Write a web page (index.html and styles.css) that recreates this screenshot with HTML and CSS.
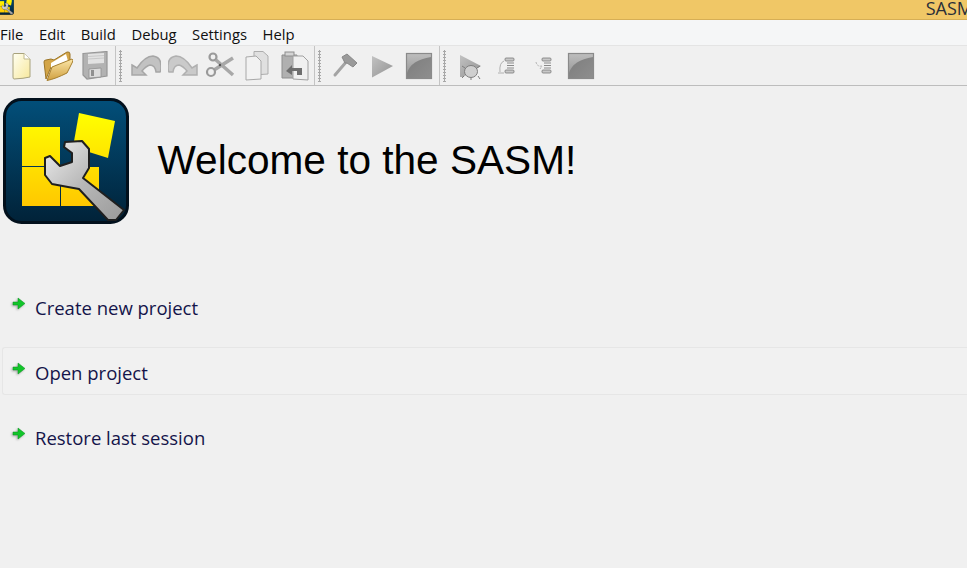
FILE: index.html
```html
<!DOCTYPE html>
<html lang="en">
<head>
<meta charset="utf-8">
<title>SASM</title>
<link rel="stylesheet" href="styles.css">
</head>
<body>
<svg class="defs" width="0" height="0" aria-hidden="true">
  <defs>
    <linearGradient id="playG" x1="0" y1="0" x2="1" y2="1"><stop offset="0" stop-color="#c2c2c2"/><stop offset="1" stop-color="#929292"/></linearGradient>
    <linearGradient id="stopLight" x1="0" y1="0" x2="0" y2="1"><stop offset="0" stop-color="#bdbdbd"/><stop offset="1" stop-color="#9a9a9a"/></linearGradient>
    <linearGradient id="stopDark" x1="0" y1="0" x2="1" y2="1"><stop offset="0" stop-color="#7c7c7c"/><stop offset="1" stop-color="#8e8e8e"/></linearGradient>
    <linearGradient id="logoBg" x1="0" y1="0" x2="0" y2="1"><stop offset="0" stop-color="#024f7a"/><stop offset="1" stop-color="#012238"/></linearGradient>
    <linearGradient id="yel" gradientUnits="userSpaceOnUse" x1="0" y1="15" x2="0" y2="108"><stop offset="0" stop-color="#ffff00"/><stop offset="1" stop-color="#ffc800"/></linearGradient>
    <linearGradient id="wr" x1="0" y1="0" x2="1" y2="1"><stop offset="0" stop-color="#efefef"/><stop offset=".5" stop-color="#b8b8b8"/><stop offset="1" stop-color="#9a9a9a"/></linearGradient>
    <linearGradient id="folder" x1="0" y1="0" x2="0" y2="1"><stop offset="0" stop-color="#fbe6a8"/><stop offset="1" stop-color="#d0a040"/></linearGradient>
    <linearGradient id="page" x1="0" y1="0" x2="1" y2="1"><stop offset="0" stop-color="#fffff2"/><stop offset="1" stop-color="#f7e89c"/></linearGradient>
    <symbol id="logo" viewBox="0 0 126 126">
      <rect x="1.5" y="1.5" width="123" height="123" rx="17" fill="url(#logoBg)" stroke="#02101c" stroke-width="3"/>
      <g fill="url(#yel)">
        <rect x="19" y="29" width="38" height="39"/>
        <rect x="19" y="69" width="38" height="39"/>
        <rect x="58" y="69" width="38" height="39"/>
        <path d="M76 15 L112 23 L105 60 L70 49 Z"/>
      </g>
      <path d="M62 44 L79 43 L86 51 L86 70 L80 80 L121 112 L113 122 L105 122 L76 91 L65 89 L49 86 L42 77 L42 60 L47 58 L57 68 L69 64 L69 55 L61 49 Z" fill="url(#wr)" stroke="#1f1f1f" stroke-width="2" stroke-linejoin="round"/>
    </symbol>
    <symbol id="arrow" viewBox="0 0 14 14">
      <path d="M1 5 H6 V1 L13 6.5 L6 12 V8 H1 Z" fill="#12c52a" stroke="#0a8f1e" stroke-width=".5"/>
    </symbol>
    <symbol id="stop" viewBox="0 0 30 30">
      <rect x="2.5" y="2.5" width="25" height="25" fill="url(#stopDark)"/>
      <path d="M3 22 Q7 9 27 6 V3 H3 Z" fill="url(#stopLight)"/>
      <rect x="2.5" y="2.5" width="25" height="25" fill="none" stroke="#8a8a8a" stroke-width="1.2"/>
    </symbol>
  </defs>
</svg>

<header class="titlebar">
  <svg class="app-icon" width="14" height="15"><use href="#logo" width="18" height="18" x="-4" y="-3"/></svg>
  <span class="title-text">SASM</span>
</header>

<nav class="menubar">
  <span class="menu">File</span>
  <span class="menu">Edit</span>
  <span class="menu">Build</span>
  <span class="menu">Debug</span>
  <span class="menu">Settings</span>
  <span class="menu">Help</span>
</nav>

<div class="toolbar">
  <div class="tool-group first">
    <span class="tool"><svg viewBox="0 0 30 30"><path d="M8 2.500 H18 L24 8 V26 Q18 27.500 8 28 Q7 28 7 26 V4 Q7 2.500 8 2.500 Z" fill="url(#page)" stroke="#a8a27c"/><path d="M18 2.500 V8 H24" fill="#fff" stroke="#c0b98e"/></svg></span>
    <span class="tool"><svg viewBox="0 0 30 30"><path d="M3 28 L1 11 Q1 9 3 9 L8 8 L11 9 L24 1 Q27 0.500 27 3 L27 10 L8 16 Z" fill="#d3a548" stroke="#9c7526"/><path d="M8 12 L23 3 L25 10 L8 17 Z" fill="#fff"/><path d="M4 29.500 L9 16 L29 8 Q30.500 9 29.500 11 L24 22 Q12 28 4 29.500 Z" fill="url(#folder)" stroke="#a67f2e"/></svg></span>
    <span class="tool"><svg viewBox="0 0 30 30"><path d="M3 2.500 L27 0.500 V25 L7 28 L3 24 Z" fill="#b2b2b2" stroke="#979797" stroke-width="1.200"/><path d="M8 3 L24 2 V12 L8 13 Z" fill="#e2e2e2"/><path d="M8 5.500 L24 4.500 M8 8 L24 7" stroke="#c8c8c8"/><path d="M9 18 L21 17 V26 L9 27 Z" fill="#dcdcdc" stroke="#8f8f8f" stroke-width=".8"/><rect x="11" y="19" width="3" height="6" fill="#909090"/></svg></span>
  </div>
  <div class="tool-group">
    <span class="handle"></span>
    <span class="tool"><svg viewBox="0 0 30 30"><path d="M1 14 L6 17 Q14 5 22 5 Q30 6 30 15 Q30 20 29 21 L25 21 Q24 14 19 14 Q15 15 11 20 L15 24 L1 24 Z" fill="#c2c2c2" stroke="#a6a6a6" stroke-width="1.500"/></svg></span>
    <span class="tool"><svg viewBox="0 0 30 30"><path d="M29 14 L24 17 Q16 5 8 5 Q0 6 0 15 Q0 20 1 21 L5 21 Q6 14 11 14 Q15 15 19 20 L15 24 L29 24 Z" fill="#cacaca" stroke="#b0b0b0" stroke-width="1.500"/></svg></span>
    <span class="tool"><svg viewBox="0 0 30 30"><path d="M11 9 L28 24 M9 19 L28 7" fill="none" stroke="#a8a8a8" stroke-width="3.500"/><circle cx="8" cy="6" r="3.500" fill="none" stroke="#9a9a9a" stroke-width="2.200"/><circle cx="6" cy="21" r="4" fill="none" stroke="#9a9a9a" stroke-width="2.200"/><circle cx="15" cy="14" r="1.200" fill="#555"/></svg></span>
    <span class="tool"><svg viewBox="0 0 30 30"><path d="M12 0.500 H21 L26 5 V23 L12 24 Z" fill="#e0e0e0" stroke="#adadad"/><path d="M4 6 L14 5 L19 10 V28 L4 29 Z" fill="#f2f2f2" stroke="#a8a8a8"/></svg></span>
    <span class="tool"><svg viewBox="0 0 30 30"><path d="M3 4 H18 V27 H3 Z" fill="#b0b0b0" stroke="#8e8e8e"/><rect x="6" y="1" width="9" height="4" fill="#d4d4d4" stroke="#8e8e8e"/><path d="M14 5 H24 L29 10 V29 L14 28 Z" fill="#f0f0f0" stroke="#a0a0a0"/><path d="M7 20 L13 14 V17 H23 V24 H18 V20 H13 V24 Z" fill="#6e6e6e"/></svg></span>
  </div>
  <div class="tool-group">
    <span class="handle"></span>
    <span class="tool"><svg viewBox="0 0 30 30"><path d="M5 24 L17 10" stroke="#a4a4a4" stroke-width="3" stroke-linecap="round"/><path d="M12 6 L17 3 L27 12 L23 16 L17 12 L15 12 Z" fill="#9a9a9a" stroke="#888"/></svg></span>
    <span class="tool"><svg viewBox="0 0 30 30"><path d="M5 5 L26 15 L5 26.500 Z" fill="url(#playG)"/></svg></span>
    <span class="tool"><svg viewBox="0 0 30 30"><use href="#stop"/></svg></span>
  </div>
  <div class="tool-group">
    <span class="handle"></span>
    <span class="tool"><svg viewBox="0 0 30 30"><path d="M5 4 L26 15 L8 26 L5 26 Z" fill="url(#playG)"/><path d="M10 17 L7 15 M9 25 L7 27 M22 17 L25 15 M23 25 L25 28 M16 27 V29" stroke="#7e7e7e"/><ellipse cx="16" cy="20.500" rx="6.500" ry="6" fill="#cfcfcf" stroke="#7e7e7e"/></svg></span>
    <span class="tool"><svg viewBox="0 0 30 30"><rect x="13" y="7" width="9" height="3" rx="1" fill="#c8c8c8" stroke="#7a7a7a" stroke-width=".8"/><rect x="13" y="19" width="9" height="3" rx="1" fill="#c8c8c8" stroke="#7a7a7a" stroke-width=".8"/><path d="M15 12 H22 M15 14.500 H22 M15 17 H22" stroke="#8a8a8a"/><path d="M12 10 Q7 12 8 21 M6 22 H12" fill="none" stroke="#b0b0b0"/></svg></span>
    <span class="tool"><svg viewBox="0 0 30 30"><rect x="13" y="7" width="9" height="3" rx="1" fill="#c8c8c8" stroke="#7a7a7a" stroke-width=".8"/><rect x="13" y="19" width="9" height="3" rx="1" fill="#c8c8c8" stroke="#7a7a7a" stroke-width=".8"/><path d="M15 12 H22 M15 14.500 H22 M15 17 H22" stroke="#8a8a8a"/><path d="M7 11 Q8 16 13 15 M11 18 L13 15" fill="none" stroke="#b4b4b4" stroke-dasharray="2 1"/></svg></span>
    <span class="tool"><svg viewBox="0 0 30 30"><use href="#stop"/></svg></span>
  </div>
</div>

<main class="welcome">
  <section class="hero">
    <svg class="logo" width="126" height="126"><use href="#logo"/></svg>
    <h1>Welcome to the SASM!</h1>
  </section>
  <ul class="actions">
    <li class="action"><svg class="arrow" width="14" height="14"><use href="#arrow"/></svg><span>Create new project</span></li>
    <li class="action hovered"><svg class="arrow" width="14" height="14"><use href="#arrow"/></svg><span>Open project</span></li>
    <li class="action"><svg class="arrow" width="14" height="14"><use href="#arrow"/></svg><span>Restore last session</span></li>
  </ul>
</main>
</body>
</html>
```

FILE: styles.css
```css
* { box-sizing: border-box; }
html, body { margin: 0; height: 100%; }
body {
  width: 967px;
  height: 568px;
  overflow: hidden;
  background: #f0f0f0;
  font-family: "Open Sans", "Noto Sans", sans-serif;
  display: flex;
  flex-direction: column;
}
.defs { display: block; height: 0; }
.titlebar {
  height: 20px;
  flex: none;
  background: #f0c766;
  border-bottom: 1px solid #d6ae55;
  display: flex;
  justify-content: space-between;
  overflow: hidden;
}
.app-icon { display: block; }
.title-text {
  font-size: 18px;
  line-height: 17px;
  color: #2a2f38;
  margin-right: -6px;
}
.menubar {
  height: 26px;
  flex: none;
  background: #f5f6f7;
  border-bottom: 1px solid #e4e4e4;
  display: flex;
  align-items: center;
  gap: 15.5px;
  padding-top: 2px;
  font-size: 14.8px;
  color: #101010;
}
.toolbar {
  height: 40px;
  flex: none;
  background: #f0f0f0;
  border-bottom: 1px solid #bdbdbd;
  display: flex;
  padding-left: 2.5px;
}
.tool-group {
  display: flex;
  align-items: center;
  border-right: 1px solid #c4c4c4;
  padding-right: 1.5px;
}
.tool-group:last-child { border-right: 0; }
.handle {
  width: 9px;
  height: 32px;
  margin-left: 1px;
  margin-right: 1.5px;
  background: radial-gradient(circle, #a8a8a8 0 1px, transparent 1.2px) 2px 0 / 3px 3px repeat-y;
}
.tool {
  width: 37px;
  height: 38px;
  display: flex;
  align-items: center;
  justify-content: center;
}
.tool svg { width: 30px; height: 30px; display: block; flex: none; }
.welcome { flex: 1; display: flex; flex-direction: column; }
.hero {
  display: flex;
  align-items: center;
  gap: 28.5px;
  padding: 12px 0 0 3px;
}
.logo { display: block; flex: none; }
h1 {
  margin: 0 0 2px;
  font-family: "Liberation Sans", Arial, sans-serif;
  font-weight: 400;
  font-size: 40.6px;
  color: #000;
}
.actions {
  list-style: none;
  margin: 58px 0 0 2px;
  padding: 0;
  display: flex;
  flex-direction: column;
  gap: 18px;
}
.action {
  height: 47px;
  display: flex;
  align-items: center;
  padding: 3px 0 0 32px;
  position: relative;
  font-size: 18.5px;
  color: #14144a;
  border: 1px solid transparent;
}
.action.hovered {
  height: 48px;
  margin-bottom: -1px;
  border: 1px solid #e6e6e6;
  border-right: 0;
  border-radius: 3px 0 0 3px;
  background: #f1f1f1;
}
.arrow {
  position: absolute;
  left: 9px;
  top: 14px;
  filter: drop-shadow(-1px 1px 1px rgba(0, 0, 0, .3));
}
```
